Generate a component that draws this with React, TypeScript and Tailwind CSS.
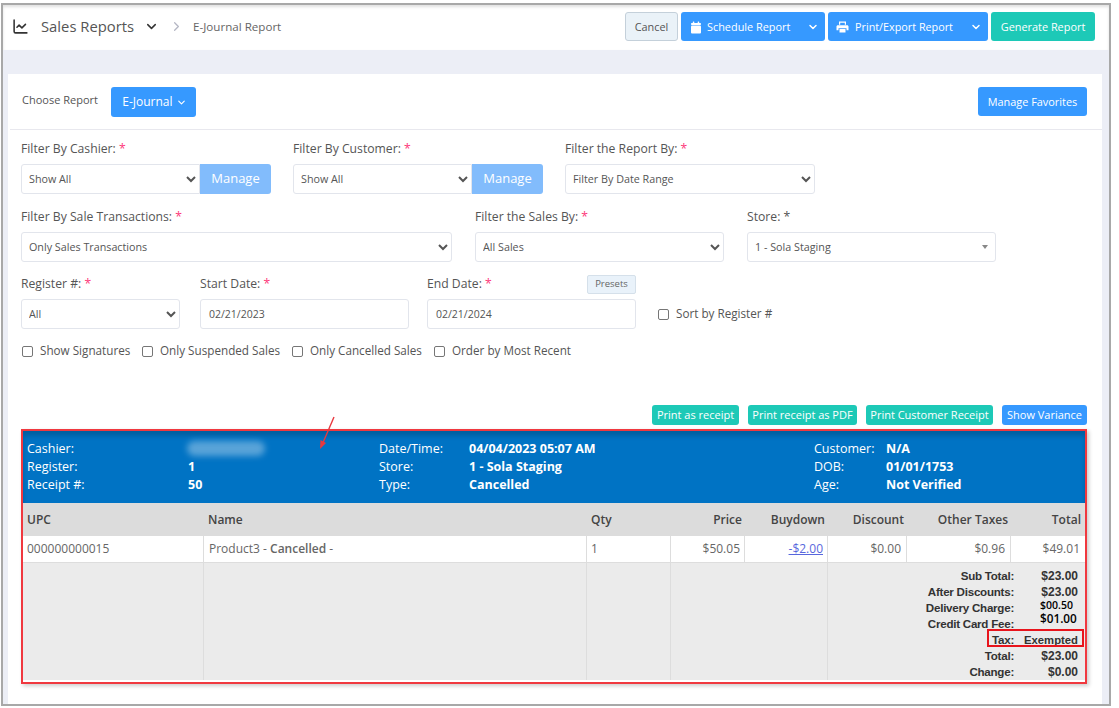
import { ChevronDown, ChevronRight, LineChart } from "lucide-react";

const COLS = "grid grid-cols-[181px_383px_84px_74px_83px_79px_104px_73px]";

function Req() {
  return <span className="text-[#fd397a]"> *</span>;
}

function Field({ label, req = true, className, children }: { label: string; req?: boolean; className: string; children: React.ReactNode }) {
  return (
    <div className={className}>
      <div className="h-[24px] text-[12.2px] leading-[18px] text-[#555]">
        {label}
        {req ? <Req /> : <span> *</span>}
      </div>
      {children}
    </div>
  );
}

function Select({ value, className = "" }: { value: string; className?: string }) {
  return (
    <select
      defaultValue={value}
      className={`h-[30px] w-full rounded-[3px] border border-[#e2e5ec] bg-white pl-[3px] text-[10.75px] text-[#555] ${className}`}
    >
      <option>{value}</option>
    </select>
  );
}

function DateInput({ value }: { value: string }) {
  return (
    <div className="flex h-[30px] items-center rounded-[3px] border border-[#e2e5ec] bg-white pl-[8px] pt-[1px] text-[10.5px] text-[#555]">
      {value}
    </div>
  );
}

function Check({ label, className = "" }: { label: string; className?: string }) {
  return (
    <div className={`flex items-center gap-[7px] text-[11.7px] text-[#555] ${className}`}>
      <span className="h-[11px] w-[11px] rounded-[2px] border border-[#767676] bg-white" />
      {label}
    </div>
  );
}

function TealButton({ label, className = "" }: { label: string; className?: string }) {
  return (
    <button className={`h-[20px] rounded-[3px] bg-[#1dc9b7] text-[11px] text-white ${className}`}>{label}</button>
  );
}

function CalendarIcon() {
  return (
    <svg width="12" height="13" viewBox="0 0 12 13" fill="currentColor">
      <rect x="1" y="4.5" width="10" height="8" rx="1" />
      <rect x="1" y="2" width="10" height="2" rx="0.8" />
      <rect x="2.8" y="0.5" width="1.5" height="2.5" rx="0.5" />
      <rect x="7.7" y="0.5" width="1.5" height="2.5" rx="0.5" />
    </svg>
  );
}

function PrinterIcon() {
  return (
    <svg width="13" height="12" viewBox="0 0 13 12" fill="currentColor">
      <path d="M3 0.5h7v3.2H8.800V1.700H4.200v2H3z" />
      <path d="M1.800 4.200h9.400c.7 0 1.300.6 1.300 1.300v3.700h-2V7.200H2.500v2h-2V5.500c0-.7.6-1.300 1.300-1.300z" />
      <path d="M3.500 8h6v3.500h-6z" />
    </svg>
  );
}

const infoLeft = [
  ["Cashier:", ""],
  ["Register:", "1"],
  ["Receipt #:", "50"],
];
const infoMid = [
  ["Date/Time:", "04/04/2023 05:07 AM"],
  ["Store:", "1 - Sola Staging"],
  ["Type:", "Cancelled"],
];
const infoRight = [
  ["Customer:", "N/A"],
  ["DOB:", "01/01/1753"],
  ["Age:", "Not Verified"],
];

const totals = [
  ["Sub Total:", "$23.00"],
  ["After Discounts:", "$23.00"],
  ["Delivery Charge:", ""],
  ["Credit Card Fee:", ""],
  ["Tax:", "Exempted"],
  ["Total:", "$23.00"],
  ["Change:", "$0.00"],
];

function Info({ rows, labelWidth, className }: { rows: string[][]; labelWidth: string; className: string }) {
  return (
    <div className={className}>
      {rows.map((r) => (
        <div key={r[0]} className="flex h-[18px] items-center text-[12.5px] text-white">
          <span className={labelWidth}>{r[0]}</span>
          <span className="font-bold">{r[1]}</span>
        </div>
      ))}
    </div>
  );
}

export default function App() {
  return (
    <div className="h-[708px] w-[1119px] overflow-hidden bg-white pl-[1px] pt-[3px] font-['Open_Sans',sans-serif]">
      <div className="flex h-[703px] w-[1110px] flex-col border-2 border-[#a8a8a8] bg-[#eceef6]">
        {/* Top bar */}
        <div className="flex h-[45px] shrink-0 items-center bg-white pb-[2px] pl-[9px] pr-[14px] shadow-[inset_0_2px_3px_rgba(0,0,0,0.12)]">
          <LineChart size={17} strokeWidth={2.2} className="text-[#333]" />
          <span className="ml-[12px] text-[14.8px] text-[#555]">Sales Reports</span>
          <ChevronDown size={15} strokeWidth={2.4} className="ml-[10px] text-[#333]" />
          <ChevronRight size={15} strokeWidth={2} className="ml-[10px] text-[#b5b7c4]" />
          <span className="ml-[9px] text-[11.6px] text-[#666]">E-Journal Report</span>
          <div className="ml-auto flex gap-[3px]">
            <button className="h-[29px] w-[53px] rounded-[3px] border border-[#c4d0da] bg-[#eaf2f8] pt-[1px] text-[10.9px] text-[#555]">
              Cancel
            </button>
            <button className="flex h-[29px] w-[144px] items-center rounded-[3px] bg-[#3699ff] pl-[9px] pt-[1px] text-[10.9px] text-white">
              <CalendarIcon />
              <span className="ml-[5px]">Schedule Report</span>
              <ChevronDown size={12} strokeWidth={3} className="ml-auto mr-[6px]" />
            </button>
            <button className="flex h-[29px] w-[160px] items-center rounded-[3px] bg-[#3699ff] pl-[8px] pt-[1px] text-[10.8px] text-white">
              <PrinterIcon />
              <span className="ml-[6px]">Print/Export Report</span>
              <ChevronDown size={12} strokeWidth={3} className="ml-auto mr-[6px]" />
            </button>
            <button className="h-[29px] w-[104px] rounded-[3px] bg-[#1dc9b7] pt-[1px] text-[10.9px] text-white">
              Generate Report
            </button>
          </div>
        </div>

        {/* Report card */}
        <div className="ml-[5px] mr-[7px] mt-[24px] flex-1 bg-white">
          <div className="ml-[2px] flex h-[56px] items-center border-b border-[#e8e8ee] pl-[12px] pr-[15px]">
            <span className="mb-[2px] text-[11px] text-[#555]">Choose Report</span>
            <button className="ml-[13px] flex h-[30px] w-[85px] items-center justify-center gap-[3px] rounded-[3px] bg-[#3699ff] pl-[2px] pt-[1px] text-[12px] text-white">
              E-Journal
              <ChevronDown size={11} strokeWidth={2.5} />
            </button>
            <button className="ml-auto h-[29px] w-[109px] rounded-[3px] bg-[#3699ff] pt-[1px] text-[10.9px] text-white">
              Manage Favorites
            </button>
          </div>

          <div className="pl-[13px] pt-[10px]">
            <div className="flex">
              <Field label="Filter By Cashier:" className="w-[272px]">
                <div className="flex w-[250px]">
                  <Select value="Show All" className="rounded-r-none" />
                  <button className="h-[30px] w-[71px] shrink-0 rounded-r-[3px] bg-[#82bcfc] text-[13px] text-white">Manage</button>
                </div>
              </Field>
              <Field label="Filter By Customer:" className="w-[272px]">
                <div className="flex w-[250px]">
                  <Select value="Show All" className="rounded-r-none" />
                  <button className="h-[30px] w-[71px] shrink-0 rounded-r-[3px] bg-[#82bcfc] text-[13px] text-white">Manage</button>
                </div>
              </Field>
              <Field label="Filter the Report By:" className="w-[250px]">
                <Select value="Filter By Date Range" />
              </Field>
            </div>

            <div className="mt-[14px] flex">
              <Field label="Filter By Sale Transactions:" className="mr-[23px] w-[431px]">
                <Select value="Only Sales Transactions" />
              </Field>
              <Field label="Filter the Sales By:" className="mr-[23px] w-[249px]">
                <Select value="All Sales" />
              </Field>
              <Field label="Store:" req={false} className="w-[249px]">
                <div className="flex h-[30px] items-center justify-between rounded-[3px] border border-[#e2e5ec] pl-[7px] pr-[7px] text-[10.75px] text-[#555]">
                  1 - Sola Staging
                  <span className="border-x-[3px] border-t-[4px] border-x-transparent border-t-[#888]" />
                </div>
              </Field>
            </div>

            <div className="mt-[13px] flex items-end">
              <Field label="Register #:" className="mr-[20px] w-[159px]">
                <Select value="All" />
              </Field>
              <Field label="Start Date:" className="mr-[18px] w-[209px]">
                <DateInput value="02/21/2023" />
              </Field>
              <div className="relative w-[209px]">
                <Field label="End Date:" className="w-full">
                  <DateInput value="02/21/2024" />
                </Field>
                <button className="absolute right-0 top-0 h-[19px] w-[49px] rounded-[2px] border border-[#d5e0ea] bg-[#e9f2fa] text-[9.5px] text-[#666]">
                  Presets
                </button>
              </div>
              <Check label="Sort by Register #" className="mb-[6px] ml-[22px]" />
            </div>

            <div className="ml-[1px] mt-[13px] flex h-[18px]">
              <Check label="Show Signatures" className="w-[120px]" />
              <Check label="Only Suspended Sales" className="w-[150px]" />
              <Check label="Only Cancelled Sales" className="w-[142px]" />
              <Check label="Order by Most Recent" />
            </div>
          </div>

          {/* Receipt actions */}
          <div className="mr-[15px] mt-[45px] flex justify-end">
            <TealButton label="Print as receipt" className="w-[87px]" />
            <TealButton label="Print receipt as PDF" className="ml-[9px] w-[109px]" />
            <TealButton label="Print Customer Receipt" className="ml-[9px] w-[127px]" />
            <button className="ml-[9px] h-[20px] w-[85px] rounded-[3px] bg-[#3699ff] text-[11px] text-white">Show Variance</button>
          </div>

          {/* Receipt */}
          <div className="relative ml-[13px] mt-[4px] h-[255px] w-[1066px] border-2 border-[#f0383f] shadow-[2px_2px_4px_rgba(0,0,0,0.2)]">
            <div className="flex h-[72px] bg-[#0073c4] pl-[4px] pt-[9px] shadow-[inset_0_5px_5px_rgba(0,0,0,0.18)]">
              <Info rows={infoLeft} labelWidth="w-[161px]" className="w-[352px]" />
              <Info rows={infoMid} labelWidth="w-[90px]" className="w-[435px]" />
              <Info rows={infoRight} labelWidth="w-[72px]" className="" />
            </div>
            <div className="absolute left-[164px] top-[10px] h-[15px] w-[78px] rounded-full bg-white/35 blur-[3px]" />

            <div className={`${COLS} h-[33px] items-center bg-[#dcdcdc] text-[12px] font-semibold text-[#444]`}>
              <span className="pl-[4px]">UPC</span>
              <span className="pl-[4px]">Name</span>
              <span className="pl-[4px]">Qty</span>
              <span className="pr-[3px] text-right">Price</span>
              <span className="pr-[3px] text-right">Buydown</span>
              <span className="pr-[3px] text-right">Discount</span>
              <span className="pr-[3px] text-right">Other Taxes</span>
              <span className="pr-[3px] text-right">Total</span>
            </div>
            <div className={`${COLS} h-[26px] items-stretch bg-white text-[12px] text-[#666]`}>
              <span className="flex items-center border-r border-[#ddd] pl-[4px]">000000000015</span>
              <span className="flex items-center border-r border-[#ddd] pl-[5px]">
                Product3 -&nbsp;<span className="font-semibold text-[#666]">Cancelled</span>&nbsp;-
              </span>
              <span className="flex items-center border-r border-[#ddd] pl-[4px]">1</span>
              <span className="flex items-center justify-end border-r border-[#ddd] pr-[4px]">$50.05</span>
              <span className="flex items-center justify-end border-r border-[#ddd] pr-[4px] text-[#5867dd] underline">-$2.00</span>
              <span className="flex items-center justify-end border-r border-[#ddd] pr-[5px]">$0.00</span>
              <span className="flex items-center justify-end border-r border-[#ddd] pr-[5px]">$0.96</span>
              <span className="flex items-center justify-end pr-[4px]">$49.01</span>
            </div>
            <div className={`${COLS} h-[118px] border-t border-[#ddd] bg-[#ebebeb]`}>
              <span className="border-r border-[#ddd]" />
              <span className="border-r border-[#ddd]" />
              <span className="border-r border-[#ddd]" />
              <span className="col-span-2 border-r border-[#ddd]" />
              <div className="col-span-3 flex flex-col pr-[6px] pt-[5px] font-['Liberation_Sans',sans-serif] text-[12px] font-bold text-[#333]">
                {totals.map((t) => (
                  <div key={t[0]} className="flex h-[16px] items-center justify-end">
                    <span className="text-[11.6px] tracking-[-0.25px]">{t[0]}</span>
                    <span className={t[1] === "Exempted" ? "w-[64px] text-right text-[11.3px]" : "w-[64px] text-right"}>{t[1]}</span>
                  </div>
                ))}
              </div>
            </div>

            {/* Pasted-in values and the annotation box */}
            <span className="absolute left-[1017px] top-[168px] text-[10.5px] font-semibold leading-[13px] text-black">$00.50</span>
            <span className="absolute left-[1017px] top-[181px] text-[11.75px] font-semibold leading-[13px] text-black">$01.00</span>
            <div className="absolute left-[964px] top-[198px] h-[18px] w-[97px] border-2 border-[#e8141c]" />
            <svg className="absolute left-[295px] top-[-15px]" width="22" height="34" viewBox="0 0 22 34" fill="none">
              <path d="M16 1 L4 29" stroke="#e8383f" strokeWidth="1.4" />
              <path d="M2 33 L2.5 24 L8 27 Z" fill="#e8383f" />
            </svg>
          </div>
        </div>
      </div>
    </div>
  );
}
